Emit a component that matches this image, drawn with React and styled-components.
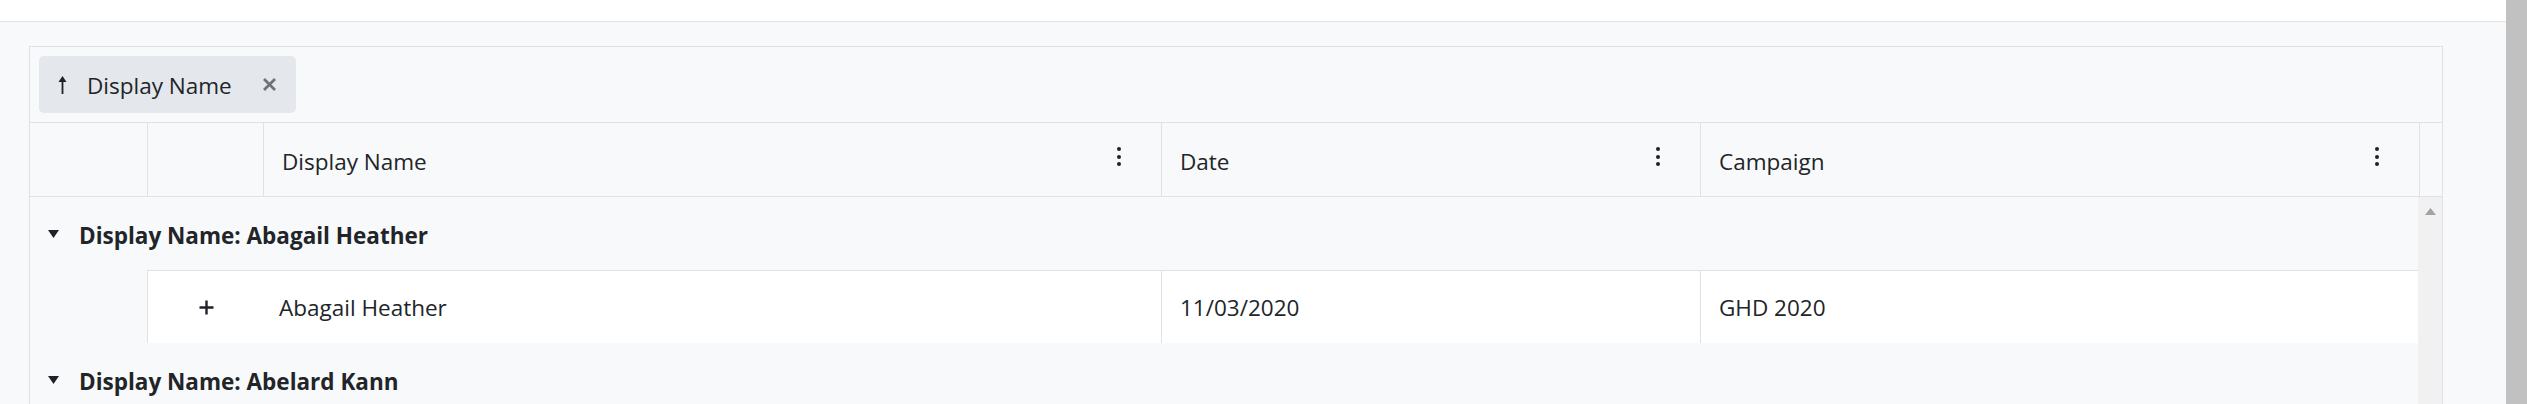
import React from "react";
import styled, { createGlobalStyle } from "styled-components";

const Global = createGlobalStyle`
  html, body { margin: 0; padding: 0; }
  body {
    font-family: "Open Sans", "Noto Sans", "Liberation Sans", sans-serif;
    color: #212529;
    background: #f8f9fa;
    overflow: hidden;
  }
  #root { height: 404px; }
`;

const Page = styled.div`
  display: flex;
  height: 404px;
  overflow: hidden;
`;

const Main = styled.div`
  flex: 1;
  display: flex;
  flex-direction: column;
  min-width: 0;
  background: #f8f9fa;
`;

const TopBar = styled.div`
  height: 21px;
  background: #ffffff;
  border-bottom: 1px solid #dfe1e4;
  flex-shrink: 0;
`;

const PageScroll = styled.div`
  width: 21px;
  flex-shrink: 0;
  background: #c1c1c1;
`;

const Content = styled.div`
  padding: 24px 63px 0 29px;
`;

const Grid = styled.div`
  border: 1px solid #dee2e6;
  border-bottom: none;
  background: #f8f9fa;
  font-size: 22.5px;
`;

const GroupPanel = styled.div`
  height: 76px;
  border-bottom: 1px solid #dee2e6;
  display: flex;
  align-items: flex-start;
  padding: 9px 0 0 9px;
  box-sizing: border-box;
`;

const Chip = styled.div`
  height: 57px;
  width: 257px;
  box-sizing: border-box;
  background: #e4e7eb;
  border-radius: 5px;
  display: flex;
  align-items: center;
  padding-left: 18px;
`;

const ChipLabel = styled.span`
  margin-left: 19px;
  line-height: 1;
  padding-top: 3px;
`;

const ChipRemove = styled.span`
  margin-left: 30px;
  display: flex;
  align-items: center;
`;

const HeaderRow = styled.div`
  display: flex;
  height: 74px;
  border-bottom: 1px solid #dee2e6;
  box-sizing: border-box;
`;

const HeaderCell = styled.div`
  width: ${(p) => p.$w}px;
  flex-shrink: 0;
  box-sizing: border-box;
  border-right: ${(p) => (p.$noBorder ? "none" : "1px solid #dee2e6")};
  display: flex;
  align-items: center;
  justify-content: space-between;
  padding: 0 40px 0 18px;
`;

const HeaderTitle = styled.span`
  line-height: 1;
  padding-top: 5px;
`;

const Kebab = styled.span`
  display: flex;
  flex-direction: column;
  gap: 3.5px;
  margin-bottom: 6px;
  & > i {
    width: 4px;
    height: 4px;
    border-radius: 50%;
    background: #1f2329;
    display: block;
  }
`;

const Body = styled.div`
  display: flex;
`;

const Rows = styled.div`
  flex: 1;
  min-width: 0;
`;

const BodyScroll = styled.div`
  width: 24px;
  flex-shrink: 0;
  background: #f1f1f1;
  display: flex;
  justify-content: center;
  padding-top: 11px;
  min-height: 220px;
  box-sizing: border-box;
`;

const GroupRow = styled.div`
  height: 73px;
  display: flex;
  align-items: center;
  padding-left: 18px;
  font-weight: 700;
`;

const GroupText = styled.span`
  margin-left: 20px;
  line-height: 1;
  padding-top: 5px;
`;

const DataRow = styled.div`
  display: flex;
  height: 73px;
`;

const Indent = styled.div`
  width: 117px;
  flex-shrink: 0;
`;

const DataCells = styled.div`
  flex: 1;
  display: flex;
  background: #ffffff;
  border-left: 1px solid #dee2e6;
  border-top: 1px solid #dee2e6;
`;

const Cell = styled.div`
  width: ${(p) => (p.$w ? `${p.$w}px` : "auto")};
  flex: ${(p) => (p.$w ? "0 0 auto" : "1")};
  box-sizing: border-box;
  display: flex;
  align-items: center;
  justify-content: ${(p) => (p.$center ? "center" : "flex-start")};
  padding-left: ${(p) => (p.$center ? 0 : p.$pad ?? 18)}px;
  padding-top: ${(p) => (p.$center ? 0 : 3)}px;
  border-right: ${(p) => (p.$border ? "1px solid #dee2e6" : "none")};
  line-height: 1;
`;

const Triangle = () => (
  <svg width="11" height="8" viewBox="0 0 11 8">
    <path d="M0 0 L11 0 L5.5 8 Z" fill="#1f2329" />
  </svg>
);

const UpArrow = () => (
  <svg width="11" height="18" viewBox="0 0 11 18">
    <path d="M5.5 0 L9.5 6 L1.5 6 Z" fill="#1f2329" />
    <rect x="4.6" y="5" width="1.8" height="13" fill="#1f2329" />
  </svg>
);

const Close = () => (
  <svg width="15" height="15" viewBox="0 0 15 15">
    <path d="M2 2 L13 13 M13 2 L2 13" stroke="#707275" strokeWidth="2.8" strokeLinecap="butt" />
  </svg>
);

const Plus = () => (
  <svg width="15" height="15" viewBox="0 0 15 15">
    <path d="M7.5 0.5 V14.5 M0.5 7.5 H14.5" stroke="#1f2329" strokeWidth="2.4" />
  </svg>
);

const ScrollUp = () => (
  <svg width="11" height="7" viewBox="0 0 11 7">
    <path d="M5.5 0 L11 7 L0 7 Z" fill="#a3a3a3" />
  </svg>
);

const Dots = () => (
  <Kebab>
    <i />
    <i />
    <i />
  </Kebab>
);

const columns = [
  { key: "a", w: 118 },
  { key: "b", w: 116 },
  { key: "name", w: 898, title: "Display Name" },
  { key: "date", w: 539, title: "Date" },
  { key: "campaign", w: 719, title: "Campaign" },
];

const groups = [
  {
    label: "Display Name: Abagail Heather",
    rows: [{ name: "Abagail Heather", date: "11/03/2020", campaign: "GHD 2020" }],
  },
  { label: "Display Name: Abelard Kann", rows: [] },
];

export default function App() {
  return (
    <>
      <Global />
      <Page>
        <Main>
          <TopBar />
          <Content>
            <Grid>
              <GroupPanel>
                <Chip>
                  <UpArrow />
                  <ChipLabel>Display Name</ChipLabel>
                  <ChipRemove>
                    <Close />
                  </ChipRemove>
                </Chip>
              </GroupPanel>
              <HeaderRow>
                {columns.map((c) => (
                  <HeaderCell key={c.key} $w={c.w}>
                    {c.title && <HeaderTitle>{c.title}</HeaderTitle>}
                    {c.title && <Dots />}
                  </HeaderCell>
                ))}
                <HeaderCell $w={23} $noBorder />
              </HeaderRow>
              <Body>
                <Rows>
                  {groups.map((g) => (
                    <React.Fragment key={g.label}>
                      <GroupRow>
                        <Triangle />
                        <GroupText>{g.label}</GroupText>
                      </GroupRow>
                      {g.rows.map((r) => (
                        <DataRow key={r.name}>
                          <Indent />
                          <DataCells>
                            <Cell $w={116} $center>
                              <Plus />
                            </Cell>
                            <Cell $w={898} $border $pad={15}>
                              {r.name}
                            </Cell>
                            <Cell $w={539} $border>
                              {r.date}
                            </Cell>
                            <Cell>{r.campaign}</Cell>
                          </DataCells>
                        </DataRow>
                      ))}
                    </React.Fragment>
                  ))}
                </Rows>
                <BodyScroll>
                  <ScrollUp />
                </BodyScroll>
              </Body>
            </Grid>
          </Content>
        </Main>
        <PageScroll />
      </Page>
    </>
  );
}
